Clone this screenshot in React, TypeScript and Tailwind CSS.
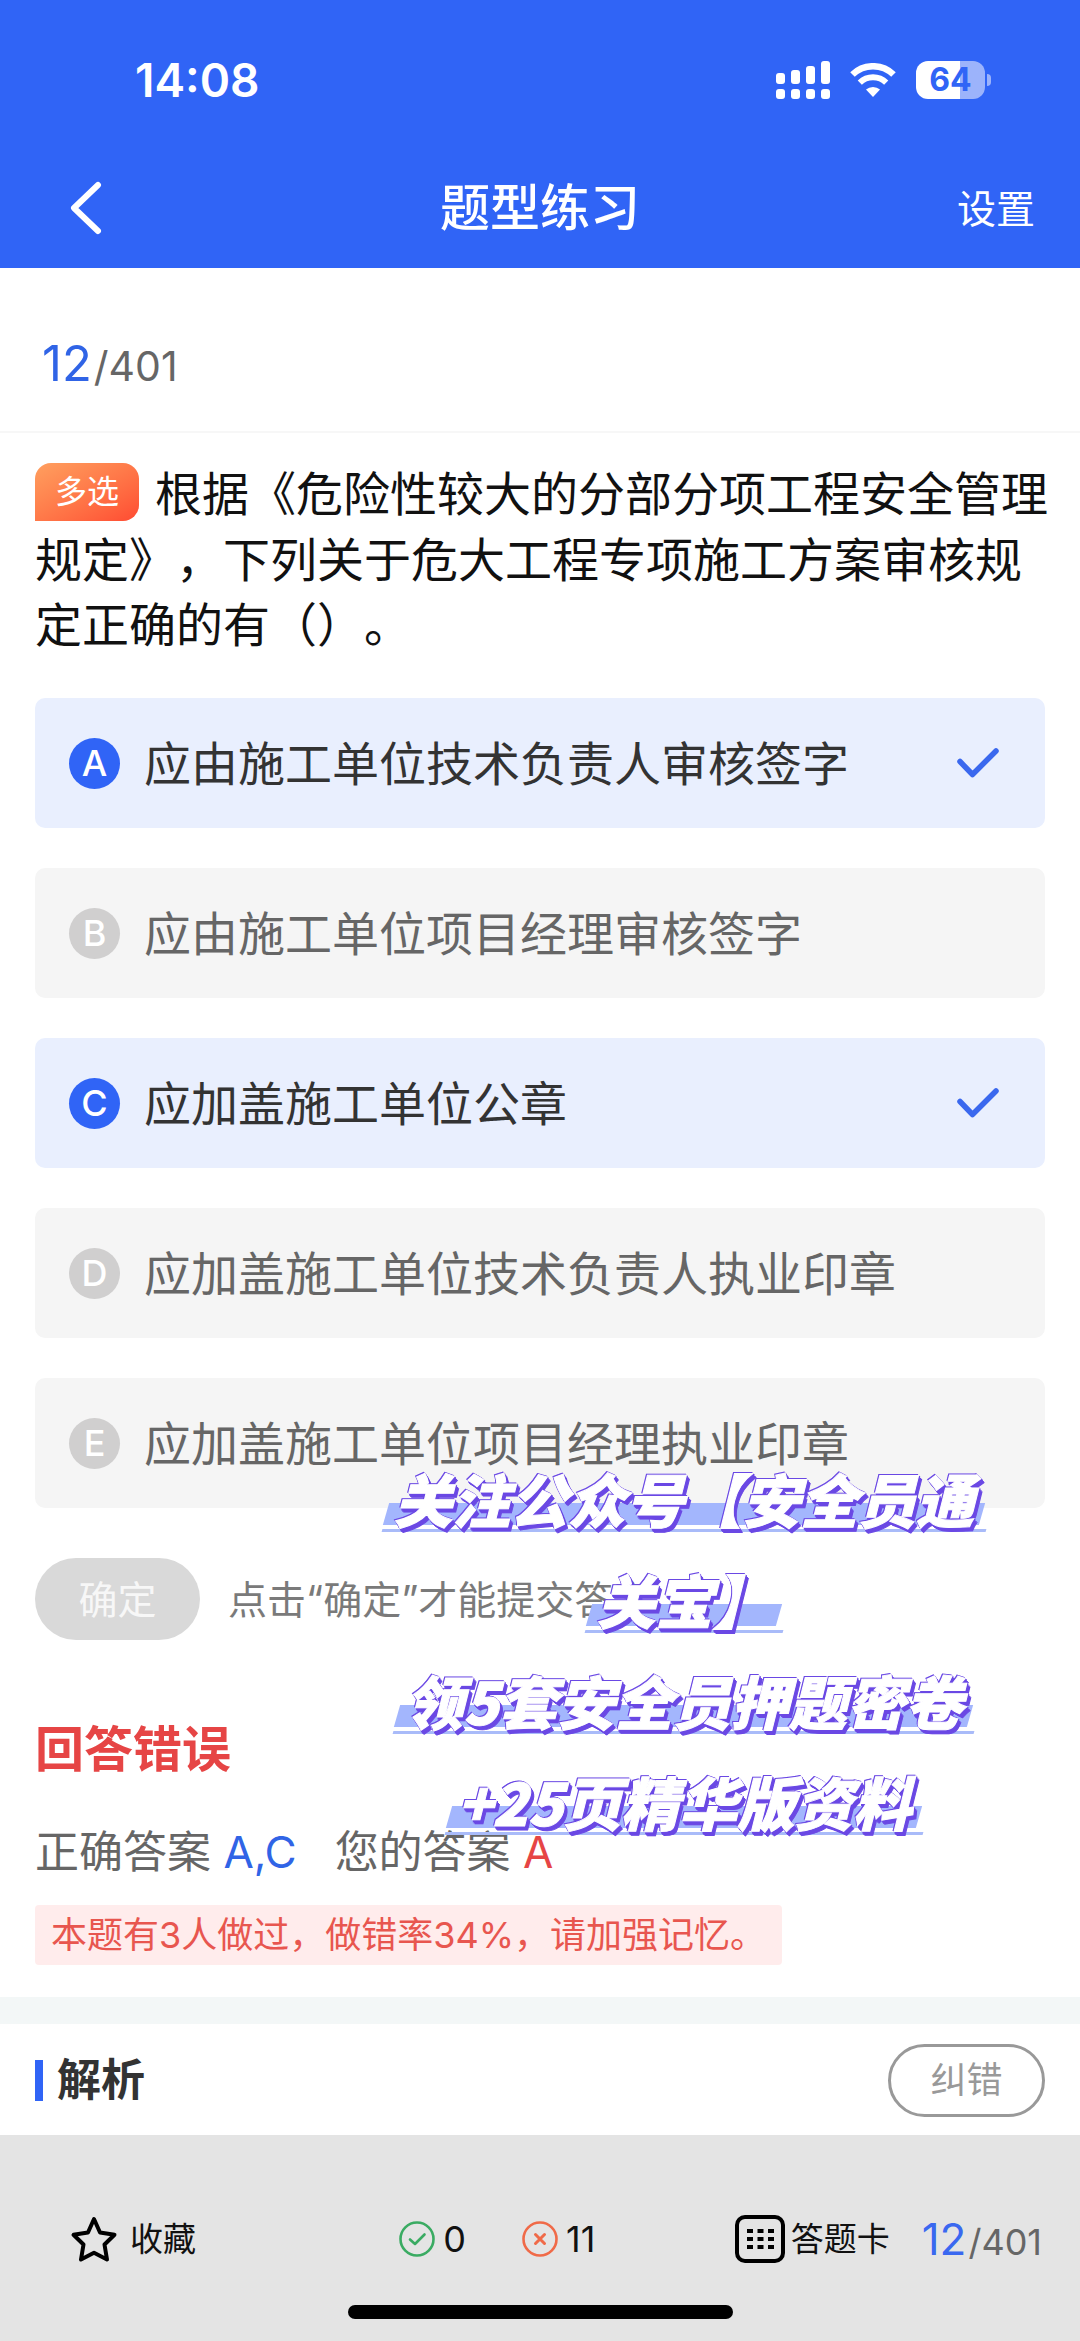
import { useState } from 'react';

const OPTIONS = [
  { key: 'A', text: '应由施工单位技术负责人审核签字' },
  { key: 'B', text: '应由施工单位项目经理审核签字' },
  { key: 'C', text: '应加盖施工单位公章' },
  { key: 'D', text: '应加盖施工单位技术负责人执业印章' },
  { key: 'E', text: '应加盖施工单位项目经理执业印章' },
];

const PROMO_LINES = ['关注公众号【安全员通', '关宝】', '领5套安全员押题密卷', '+25页精华版资料'];

function SignalIcon() {
  return (
    <svg width="54" height="38" viewBox="0 0 54 38" fill="white" aria-hidden="true">
      <rect x="0" y="12" width="9" height="11" rx="3" />
      <rect x="15" y="9" width="9" height="14" rx="3" />
      <rect x="30" y="5" width="9" height="18" rx="3" />
      <rect x="45" y="0" width="9" height="23" rx="3" />
      <rect x="0" y="28" width="9" height="10" rx="3" />
      <rect x="15" y="28" width="9" height="10" rx="3" />
      <rect x="30" y="28" width="9" height="10" rx="3" />
      <rect x="45" y="28" width="9" height="10" rx="3" />
    </svg>
  );
}

function WifiIcon() {
  return (
    <svg width="46" height="34" viewBox="0 0 46 34" fill="none" stroke="white" aria-hidden="true">
      <path d="M2.5 11.5a29.5 29.5 0 0 1 41 0" strokeWidth="6.5" />
      <path d="M9.8 19.6a19 19 0 0 1 26.4 0" strokeWidth="6" />
      <path d="M23 34l-7-7.4a10.4 10.4 0 0 1 14 0z" fill="white" stroke="none" />
    </svg>
  );
}

function Battery() {
  return (
    <div className="flex items-center gap-0.5">
      <div className="flex h-[38px] w-[69px] items-center justify-center rounded-xl bg-linear-to-r from-white from-64% to-[#9cb3fb] to-64% text-[32px] leading-none font-bold text-[#3064f6]">
        64
      </div>
      <div className="h-3 w-1 rounded-r-full bg-[#9cb3fb]" />
    </div>
  );
}

function Counter({ large }: { large?: boolean }) {
  return (
    <div className="flex items-baseline gap-0.5 text-[#666]">
      <span className={large ? 'text-[49px] text-[#3064e6]' : 'text-[44px] text-[#3a68f0]'}>12</span>
      <span className={large ? 'text-[41px]' : 'text-[36px]'}>/401</span>
    </div>
  );
}

function PromoBanner() {
  return (
    <div className="pointer-events-none absolute top-[1183px] right-[94px] flex flex-col items-center font-['Noto_Sans_CJK_SC',sans-serif]">
      {PROMO_LINES.map(line => (
        <div key={line} className="relative flex h-[101px] items-center px-3 pb-2">
          <div className="absolute inset-x-1 top-[52px] h-[22px] -skew-x-[16deg] bg-[#a3b6fd]" />
          <div className="absolute inset-x-0 top-[78px] h-[3px] -skew-x-[16deg] bg-[#a9bbf9]" />
          <span className="relative text-[58px] leading-none font-black whitespace-nowrap text-white italic [-webkit-text-stroke:1px_white] [filter:drop-shadow(1px_1px_0_#6a48e4)_drop-shadow(-1px_-1px_0_#6a48e4)_drop-shadow(2px_3px_0_#6a48e4)]">
            {line}
          </span>
        </div>
      ))}
    </div>
  );
}

export default function App() {
  const [selected, setSelected] = useState<string[]>(['A', 'C']);

  const toggleOption = (key: string) => {
    if (selected.includes(key)) {
      setSelected(selected.filter(k => k !== key));
    } else {
      setSelected([...selected, key]);
    }
  };

  return (
    <div
      lang="zh-CN"
      className="flex min-h-screen flex-col bg-white font-[Inter,'Noto_Sans_CJK_SC',sans-serif] text-[#333] [text-spacing-trim:space-all]"
    >
      <header className="bg-[#3064f6] pb-3 text-white">
        <div className="flex h-40 items-center justify-between pr-[89px] pl-[135px]">
          <span className="text-[46px] leading-none font-semibold">14:08</span>
          <div className="flex items-center gap-5">
            <SignalIcon />
            <WifiIcon />
            <Battery />
          </div>
        </div>
        <nav className="grid h-24 grid-cols-3 items-center px-[45px]">
          <button aria-label="返回" className="justify-self-start pl-6">
            <svg width="34" height="54" viewBox="0 0 34 54" fill="none" stroke="white" strokeWidth="6" strokeLinecap="round" strokeLinejoin="round">
              <path d="M29 4L5 27l24 23" />
            </svg>
          </button>
          <h1 className="justify-self-center text-[50px] leading-none font-medium">题型练习</h1>
          <button className="justify-self-end text-[39px] leading-none">设置</button>
        </nav>
      </header>

      <main className="relative flex-1">
        <div className="border-b-2 border-[#f7f7f7] pt-16 pb-[33px] pl-[42px] leading-16">
          <Counter large />
        </div>

        <section className="px-[35px]">
          <h2 className="-mr-4 pt-7 text-[47px] leading-[65px] text-[#111]">
            <span className="-mt-1.5 mr-4 mb-1.5 inline-flex h-[58px] w-[104px] items-center justify-center rounded-2xl rounded-bl-none bg-linear-to-br from-[#ff9f5f] to-[#ff4a32] align-middle text-[32px] leading-none text-white">
              多选
            </span>
            根据《危险性较大的分部分项工程安全管理规定》，下列关于危大工程专项施工方案审核规定正确的有（）。
          </h2>

          <div className="mt-[41px] flex flex-col gap-10">
            {OPTIONS.map(({ key, text }) => {
              const checked = selected.includes(key);
              return (
                <label
                  key={key}
                  className={`relative flex h-[130px] items-center rounded-[10px] pr-[46px] pl-[34px] ${checked ? 'bg-[#e9effe] text-[#333]' : 'bg-[#f5f5f5] text-[#666]'}`}
                >
                  <input type="checkbox" className="sr-only" checked={checked} onChange={() => toggleOption(key)} />
                  <span
                    className={`flex size-[51px] items-center justify-center rounded-full text-[36px] leading-none font-medium text-white ${checked ? 'bg-[#3064f6]' : 'bg-[#d0cfcf]'}`}
                  >
                    {key}
                  </span>
                  <span className="ml-6 flex-1 text-[47px] leading-none">{text}</span>
                  {checked && (
                    <svg width="42" height="30" viewBox="0 0 42 30" fill="none" stroke="#3a68ee" strokeWidth="5.5" strokeLinecap="round" strokeLinejoin="round">
                      <path d="M3 13.5L15.5 26.5L39 3" />
                    </svg>
                  )}
                </label>
              );
            })}
          </div>

          <div className="mt-[50px] flex items-center gap-7">
            <button className="h-[82px] w-[165px] rounded-full bg-[#d9d9d9] text-[39px] leading-none text-[#f7f7f7]">确定</button>
            <p className="text-[39px] leading-none text-[#7a7a7a]">点击“确定”才能提交答案</p>
          </div>

          <h3 className="mt-[78px] text-[49px] leading-16 font-bold text-[#e64545]">回答错误</h3>
          <div className="mt-[38px] flex gap-[38px] text-[44px] leading-16 text-[#666]">
            <p>
              正确答案 <span className="text-[#3064e6]">A,C</span>
            </p>
            <p>
              您的答案 <span className="text-[#e64545]">A</span>
            </p>
          </div>
          <p className="mt-[21px] mb-8 w-fit rounded bg-[#ffecec] px-4 text-[36px] leading-[60px] text-[#e8564f]">
            本题有3人做过，做错率34%，请加强记忆。
          </p>
        </section>

        <div className="h-[27px] bg-[#f3f7f7]" />

        <section className="flex h-[110px] items-center justify-between px-[35px] pt-0.5">
          <div className="flex items-center gap-3.5">
            <div className="h-[41px] w-2 bg-[#3064f6]" />
            <h3 className="text-[44px] leading-none font-bold">解析</h3>
          </div>
          <button className="h-[73px] w-[157px] rounded-full border-[3px] border-[#999] text-[36px] leading-none text-[#999]">纠错</button>
        </section>

        <PromoBanner />
      </main>

      <footer className="bg-[#e4e4e4] pt-20 pb-[22px] text-[#111]">
        <div className="flex h-12 items-center justify-between pr-[38px] pl-[70px]">
          <button className="flex items-center gap-3 text-[33px] leading-none">
            <svg width="48" height="48" viewBox="0 0 48 48" fill="none" stroke="black" strokeWidth="4" strokeLinejoin="round">
              <path d="M24 4L30 17.5L44.5 19.8L34.5 29.5L37 44.5L24 37.8L11 44.5L13.5 29.5L3.5 19.8L18 17.5Z" />
            </svg>
            收藏
          </button>
          <div className="flex gap-14 pl-16 text-[36px] leading-none">
            <span className="flex items-center gap-2">
              <svg width="36" height="36" viewBox="0 0 36 36" fill="none" stroke="#3aab62" strokeWidth="2.6" strokeLinecap="round" strokeLinejoin="round">
                <circle cx="18" cy="18" r="16.5" />
                <path d="M11 18.5L16 23L25.5 13.5" />
              </svg>
              0
            </span>
            <span className="flex items-center gap-2">
              <svg width="36" height="36" viewBox="0 0 36 36" fill="none" stroke="#f06a48" strokeWidth="2.6" strokeLinecap="round">
                <circle cx="18" cy="18" r="16.5" />
                <path d="M13.5 13.5L22.5 22.5M22.5 13.5L13.5 22.5" strokeWidth="3" />
              </svg>
              11
            </span>
          </div>
          <div className="flex items-center gap-8">
            <button className="flex items-center gap-1.5 text-[33px] leading-none">
              <svg width="50" height="48" viewBox="0 0 50 48" aria-hidden="true">
                <rect x="2" y="2" width="46" height="44" rx="8" fill="none" stroke="black" strokeWidth="4" />
                <path d="M12 16h27M12 24h27M12 32h27" stroke="black" strokeWidth="4" strokeDasharray="6 4.5" />
              </svg>
              答题卡
            </button>
            <Counter />
          </div>
        </div>
        <div className="mx-auto mt-[42px] h-3.5 w-[385px] rounded-full bg-black" />
      </footer>
    </div>
  );
}
